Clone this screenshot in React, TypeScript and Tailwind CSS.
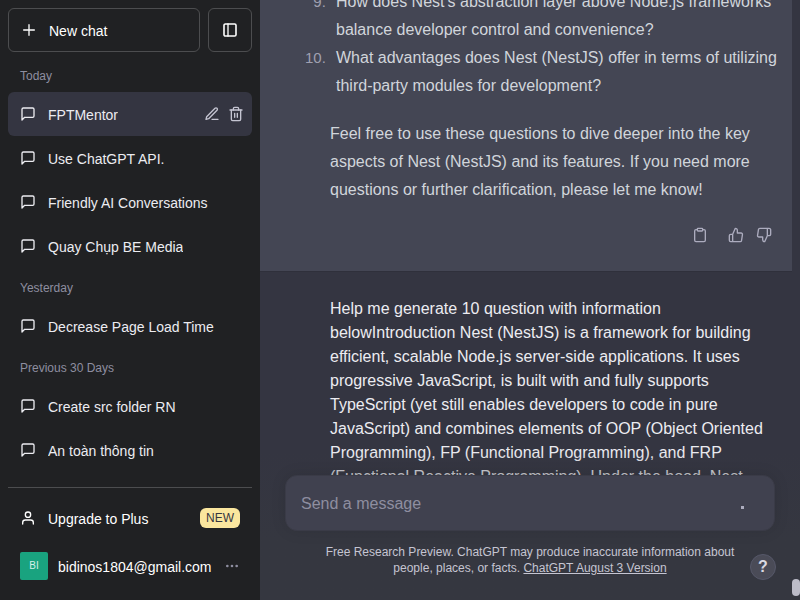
import type { ReactNode } from "react";

function Icon({ size = 16, className = "", children }: { size?: number; className?: string; children: ReactNode }) {
  return (
    <svg
      width={size}
      height={size}
      viewBox="0 0 24 24"
      fill="none"
      stroke="currentColor"
      strokeWidth="2"
      strokeLinecap="round"
      strokeLinejoin="round"
      className={`shrink-0 ${className}`}
      aria-hidden="true"
    >
      {children}
    </svg>
  );
}

const PlusIcon = () => (
  <Icon>
    <path d="M12 4v16M4 12h16" />
  </Icon>
);

const SidebarIcon = () => (
  <Icon>
    <rect x="3" y="3" width="18" height="18" rx="2" strokeWidth="2.4" />
    <path d="M9 3v18" />
  </Icon>
);

const ChatIcon = () => (
  <Icon>
    <path d="M21 15a2 2 0 0 1-2 2H7l-4 4V5a2 2 0 0 1 2-2h14a2 2 0 0 1 2 2z" />
  </Icon>
);

const EditIcon = () => (
  <Icon>
    <path d="M12 20h9" />
    <path d="M16.5 3.5a2.121 2.121 0 0 1 3 3L7 19l-4 1 1-4L16.5 3.5z" />
  </Icon>
);

const TrashIcon = () => (
  <Icon>
    <path d="M3 6h18" />
    <path d="M19 6v14a2 2 0 0 1-2 2H7a2 2 0 0 1-2-2V6m3 0V4a2 2 0 0 1 2-2h4a2 2 0 0 1 2 2v2" />
    <path d="M10 11v6M14 11v6" />
  </Icon>
);

const UserIcon = () => (
  <Icon>
    <path d="M20 21v-2a4 4 0 0 0-4-4H8a4 4 0 0 0-4 4v2" />
    <circle cx="12" cy="7" r="4" />
  </Icon>
);

const DotsIcon = () => (
  <Icon className="text-[#8e8ea0]">
    <circle cx="12" cy="12" r="1" />
    <circle cx="19" cy="12" r="1" />
    <circle cx="5" cy="12" r="1" />
  </Icon>
);

const ClipboardIcon = () => (
  <Icon>
    <path d="M16 4h2a2 2 0 0 1 2 2v14a2 2 0 0 1-2 2H6a2 2 0 0 1-2-2V6a2 2 0 0 1 2-2h2" />
    <rect x="8" y="2" width="8" height="4" rx="1" />
  </Icon>
);

const ThumbUpIcon = () => (
  <Icon>
    <path d="M14 9V5a3 3 0 0 0-3-3l-4 9v11h11.28a2 2 0 0 0 2-1.7l1.38-9a2 2 0 0 0-2-2.3zM7 22H4a2 2 0 0 1-2-2v-7a2 2 0 0 1 2-2h3" />
  </Icon>
);

const ThumbDownIcon = () => (
  <Icon>
    <path d="M10 15v4a3 3 0 0 0 3 3l4-9V2H5.72a2 2 0 0 0-2 1.7l-1.38 9a2 2 0 0 0 2 2.3zm7-13h2.67A2.31 2.31 0 0 1 22 4v7a2.31 2.31 0 0 1-2.33 2H17" />
  </Icon>
);

const history = [
  { label: "Today", chats: ["FPTMentor", "Use ChatGPT API.", "Friendly AI Conversations", "Quay Chụp BE Media"] },
  { label: "Yesterday", chats: ["Decrease Page Load Time"] },
  { label: "Previous 30 Days", chats: ["Create src folder RN", "An toàn thông tin"] },
];

function ChatRow({ title, active }: { title: string; active: boolean }) {
  return (
    <li className={`flex h-11 items-center rounded-md ${active ? "bg-[#343541]" : ""}`}>
      <a href="#" className="flex min-w-0 flex-1 items-center gap-3 pl-3 text-sm text-[#ececf1]">
        <ChatIcon />
        <span className="truncate pt-0.5">{title}</span>
      </a>
      {active && (
        <div className="flex gap-2 pr-2 text-[#c5c5d2]">
          <button aria-label="Rename chat">
            <EditIcon />
          </button>
          <button aria-label="Delete chat">
            <TrashIcon />
          </button>
        </div>
      )}
    </li>
  );
}

function Sidebar() {
  return (
    <aside className="flex w-[260px] shrink-0 flex-col bg-[#202123] px-2 pt-2 pb-3 text-sm text-white">
      <div className="mb-2 flex gap-2">
        <button className="flex h-11 flex-1 items-center gap-3 rounded-md border border-white/20 px-3">
          <PlusIcon />
          <span className="pt-0.5">New chat</span>
        </button>
        <button aria-label="Hide sidebar" className="flex size-11 items-center justify-center rounded-md border border-white/20">
          <SidebarIcon />
        </button>
      </div>
      <nav className="flex flex-1 flex-col gap-1 overflow-hidden">
        {history.map((group) => (
          <section key={group.label}>
            <h3 className="flex h-8 items-center px-3 text-xs text-[#8e8ea0]">{group.label}</h3>
            <ul>
              {group.chats.map((title) => (
                <ChatRow key={title} title={title} active={title === "FPTMentor"} />
              ))}
            </ul>
          </section>
        ))}
      </nav>
      <div className="flex flex-col gap-1 border-t border-white/20 pt-2">
        <button className="flex h-11 items-center gap-3 px-3">
          <UserIcon />
          <span className="flex-1 pt-0.5 text-left">Upgrade to Plus</span>
          <span className="rounded-md bg-[#fae69e] px-1.5 text-xs leading-5 text-[#343541]">NEW</span>
        </button>
        <button className="flex h-11 items-center px-3">
          <span className="flex size-7 items-center justify-center rounded-xs bg-[#19a37f] text-[10px] text-[#d5efe8]">BI</span>
          <span className="flex-1 truncate pt-0.5 pl-2.5 text-left">bidinos1804@gmail.com</span>
          <DotsIcon />
        </button>
      </div>
    </aside>
  );
}

export default function App() {
  return (
    <div className="flex h-screen overflow-hidden font-['Liberation_Sans',Arial,sans-serif]">
      <Sidebar />
      <main className="relative min-w-0 flex-1 overflow-hidden bg-[#343541]">
        <div className="h-full overflow-hidden pr-2">
          <article className="border-b border-[#2f303b] bg-[#444654] pr-4 pb-7 pl-[70px] text-[#d1d5db]">
            <div className="-mt-3 leading-7">
              <ol start={9} className="-mr-3 list-decimal marker:text-[15px] marker:text-[#a0a0b0]">
                <li className="pl-1.5">
                  How does Nest's abstraction layer above Node.js frameworks balance developer control and convenience?
                </li>
                <li className="pl-1.5">
                  What advantages does Nest (NestJS) offer in terms of utilizing third-party modules for development?
                </li>
              </ol>
              <p className="mt-5">
                Feel free to use these questions to dive deeper into the key aspects of Nest (NestJS) and its features. If
                you need more questions or further clarification, please let me know!
              </p>
            </div>
            <div className="mt-[23px] flex justify-end gap-3 pr-1 text-[#acacbe]">
              <button aria-label="Copy" className="mr-2">
                <ClipboardIcon />
              </button>
              <button aria-label="Good response">
                <ThumbUpIcon />
              </button>
              <button aria-label="Bad response">
                <ThumbDownIcon />
              </button>
            </div>
          </article>
          <article className="pt-[25px] pr-4 pl-[70px] leading-6 text-[#ececf1]">
            Help me generate 10 question with information belowIntroduction Nest (NestJS) is a framework for building
            efficient, scalable Node.js server-side applications. It uses progressive JavaScript, is built with and fully
            supports TypeScript (yet still enables developers to code in pure JavaScript) and combines elements of OOP
            (Object Oriented Programming), FP (Functional Programming), and FRP (Functional Reactive Programming). Under
            the hood, Nest
          </article>
        </div>

        <div className="absolute inset-x-0 bottom-0 bg-linear-to-b from-[#353740]/0 to-[#353740] to-60% px-[25px] pt-6 pb-6">
          <form className="flex h-14 items-center rounded-xl border border-[#3a3b47] bg-[#40414f] pr-[30px] pl-[15px] shadow-[0_0_15px_rgba(0,0,0,0.1)]">
            <input
              aria-label="Message"
              placeholder="Send a message"
              className="min-w-0 flex-1 bg-transparent pt-0.5 text-[#ececf1] outline-none placeholder:text-[#8e8ea0]"
            />
            <span className="mt-2 size-[3px] bg-[#acacbe]" />
          </form>
          <p className="px-10 pt-[13px] text-center text-xs leading-4 text-[#c5c5d2]">
            Free Research Preview. ChatGPT may produce inaccurate information about people, places, or facts.{" "}
            <a href="#" className="underline">
              ChatGPT August 3 Version
            </a>
          </p>
        </div>
        <button
          aria-label="Help"
          className="absolute right-6 bottom-5 size-[26px] rounded-full border border-[#565869] bg-[#4a4b57] text-base leading-6 font-bold text-[#d9d9e3]"
        >
          ?
        </button>
        <div className="absolute right-0 bottom-1 h-[17px] w-2 rounded-full bg-[#bcbcc8]" />
      </main>
    </div>
  );
}
